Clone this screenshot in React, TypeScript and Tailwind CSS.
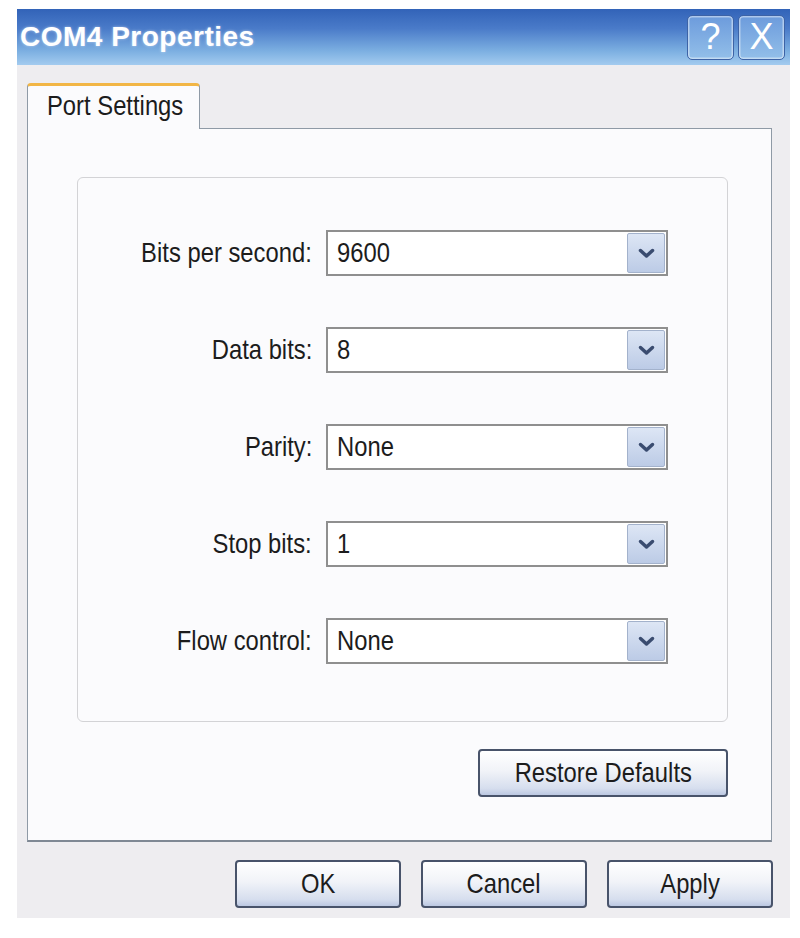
import React from 'react'

// ─── Pieces ──────────────────────────────────────────────────

function Narrow({ children, origin = 'origin-left' }: { children: React.ReactNode; origin?: string }) {
  return <span className={`inline-block whitespace-nowrap scale-x-[0.85] ${origin}`}>{children}</span>
}

function Chevron() {
  return (
    <svg width="17" height="11" viewBox="0 0 17 11">
      <polyline points="2.5,2.5 8.5,8 14.5,2.5" fill="none" stroke="#3a4c70" strokeWidth="3.5" strokeLinecap="round" strokeLinejoin="round" />
    </svg>
  )
}

function Combo({ label, value }: { label: string; value: string }) {
  return (
    <div className="flex items-center h-[46px]">
      <div className="w-[234px] text-right text-[28px] leading-none text-[#1c1c1c]">
        <Narrow origin="origin-right">{label}</Narrow>
      </div>
      <div className="ml-[14px] w-[342px] h-[46px] border-2 border-[#8f8f8f] bg-white flex items-center">
        <div className="pl-[9px] flex-1 text-[28px] leading-none text-[#1c1c1c]">
          <Narrow>{value}</Narrow>
        </div>
        <div className="w-[38px] h-[40px] mr-px rounded-[2px] border border-[#a3b2cc] bg-[linear-gradient(to_bottom,#dde6f5,#bccbe6)] flex items-center justify-center">
          <Chevron />
        </div>
      </div>
    </div>
  )
}

function XpButton({ label, w }: { label: string; w: string }) {
  return (
    <button
      className={`${w} h-[48px] rounded-[4px] border-2 border-[#48536a] bg-[linear-gradient(to_bottom,#ffffff_0%,#f1f3f8_45%,#d6deee_85%,#bcc8e2_100%)] flex items-center justify-center text-[28px] leading-none text-[#1c1c1c]`}
    >
      <Narrow origin="origin-center">{label}</Narrow>
    </button>
  )
}

function CaptionButton({ glyph }: { glyph: string }) {
  return (
    <div className="w-[47px] h-[45px] rounded-[5px] border border-[#3d63a6] shadow-[inset_0_0_0_1.5px_rgba(255,255,255,0.45)] bg-[linear-gradient(to_bottom,#6c9bdc,#93bfe9)] flex items-center justify-center text-white text-[36px] leading-none">
      {glyph}
    </div>
  )
}

// ─── Data ────────────────────────────────────────────────────

const ROWS = [
  { label: 'Bits per second:', value: '9600' },
  { label: 'Data bits:', value: '8' },
  { label: 'Parity:', value: 'None' },
  { label: 'Stop bits:', value: '1' },
  { label: 'Flow control:', value: 'None' },
]

// ─── Main ────────────────────────────────────────────────────

export default function App() {
  return (
    <div className="min-h-screen bg-white pt-[9px] pl-[17px] font-['Liberation_Sans',Arial,sans-serif]">
      <div className="w-[773px] flex flex-col">
        {/* title bar */}
        <div className="h-[56px] flex items-center justify-between pl-[3px] pr-[5px] bg-[linear-gradient(to_bottom,#3263b8_0%,#4a7bc9_35%,#7cafe1_75%,#a3cbef_100%)]">
          <span className="text-white font-bold text-[28px] leading-none tracking-[0.5px] [text-shadow:0_0_3px_rgba(255,255,255,0.5)]">
            COM4 Properties
          </span>
          <div className="flex gap-[4px]">
            <CaptionButton glyph="?" />
            <CaptionButton glyph="X" />
          </div>
        </div>

        {/* body */}
        <div className="h-[853px] bg-[#eeedf0] pl-[10px] pr-[18px] pt-[18px] flex flex-col">
          <div className="flex h-[45px]">
            <div className="relative z-10 w-[173px] h-[46px] rounded-t-[4px] border-x border-[#8f9aa6] border-t-[3px] border-t-[#f2b646] bg-[#fbfbfd] pl-[19px] pt-[6px] text-[28px] leading-none text-[#1c1c1c]">
              <Narrow>Port Settings</Narrow>
            </div>
          </div>

          <div className="h-[714px] border border-[#8f9aa6] border-b-2 border-b-[#7f8894] bg-[#fbfbfd] pl-[49px] pt-[48px]">
            <div className="w-[651px] h-[545px] rounded-[6px] border border-[#d3d3d6] pt-[52px] flex flex-col gap-[51px]">
              {ROWS.map(r => (
                <Combo key={r.label} label={r.label} value={r.value} />
              ))}
            </div>
            <div className="w-[651px] mt-[27px] flex justify-end">
              <XpButton label="Restore Defaults" w="w-[250px]" />
            </div>
          </div>

          <div className="mt-[18px] flex justify-end gap-[20px] -mr-px">
            <XpButton label="OK" w="w-[166px]" />
            <XpButton label="Cancel" w="w-[166px]" />
            <XpButton label="Apply" w="w-[166px]" />
          </div>
        </div>
      </div>
    </div>
  )
}
